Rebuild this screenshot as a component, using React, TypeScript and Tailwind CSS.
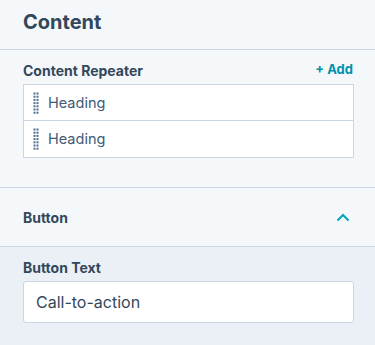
import React from "react";

const Handle = () => (
  <svg width="6" height="22" viewBox="0 0 6 22" className="shrink-0">
    {[0, 1, 2, 3, 4, 5, 6].map((r) =>
      [0, 3].map((c) => (
        <rect key={`${r}-${c}`} x={c + 0.5} y={r * 3.2 + 0.5} width="2" height="2" fill="#516f90" />
      ))
    )}
  </svg>
);

const Row = ({ label, last }: { label: string; last?: boolean }) => (
  <div className={`flex h-[36px] items-center gap-[9px] pl-[9px] ${last ? "" : "border-b border-[#cbd6e2]"}`}>
    <Handle />
    <span className="text-[14.5px] text-[#425b76]">{label}</span>
  </div>
);

export default function App() {
  return (
    <div className="w-[375px] h-[345px] overflow-hidden bg-[#f5f8fa] text-[#33475b]" style={{ fontFamily: "Inter, 'Noto Sans', sans-serif" }}>
      <div className="h-[50px] border-b border-[#cbd6e2] px-[23px] pt-[8px]">
        <h1 className="text-[20px] font-bold leading-[28px]">Content</h1>
      </div>
      <div className="h-[138px] border-b border-[#cbd6e2] px-[22px] pt-[10px]">
        <div className="flex items-center justify-between h-[20px] pl-[1px]">
          <span className="text-[14px] font-bold">Content Repeater</span>
          <span className="text-[13px] font-bold text-[#0091ae]">+ Add</span>
        </div>
        <div className="mt-[4px] ml-[1px] w-[331px] border border-[#cbd6e2] bg-white">
          <Row label="Heading" />
          <Row label="Heading" last />
        </div>
      </div>
      <div className="h-[59px] border-b border-[#cbd6e2] px-[23px] flex items-center justify-between">
        <span className="text-[14px] font-bold">Button</span>
        <svg width="14" height="9" viewBox="0 0 14 9" className="mr-[2px]">
          <path d="M1.5 7.5 L7 2 L12.5 7.5" fill="none" stroke="#00a4bd" strokeWidth="2" />
        </svg>
      </div>
      <div className="bg-[#eaf0f6] h-full px-[23px] pt-[11px]">
        <div className="text-[14px] font-bold leading-[20px]">Button Text</div>
        <div className="mt-[3px] h-[42px] w-[331px] rounded-[3px] border border-[#cbd6e2] bg-white flex items-center px-[12px]">
          <span className="text-[16px] text-[#33475b]">Call-to-action</span>
        </div>
      </div>
    </div>
  );
}
